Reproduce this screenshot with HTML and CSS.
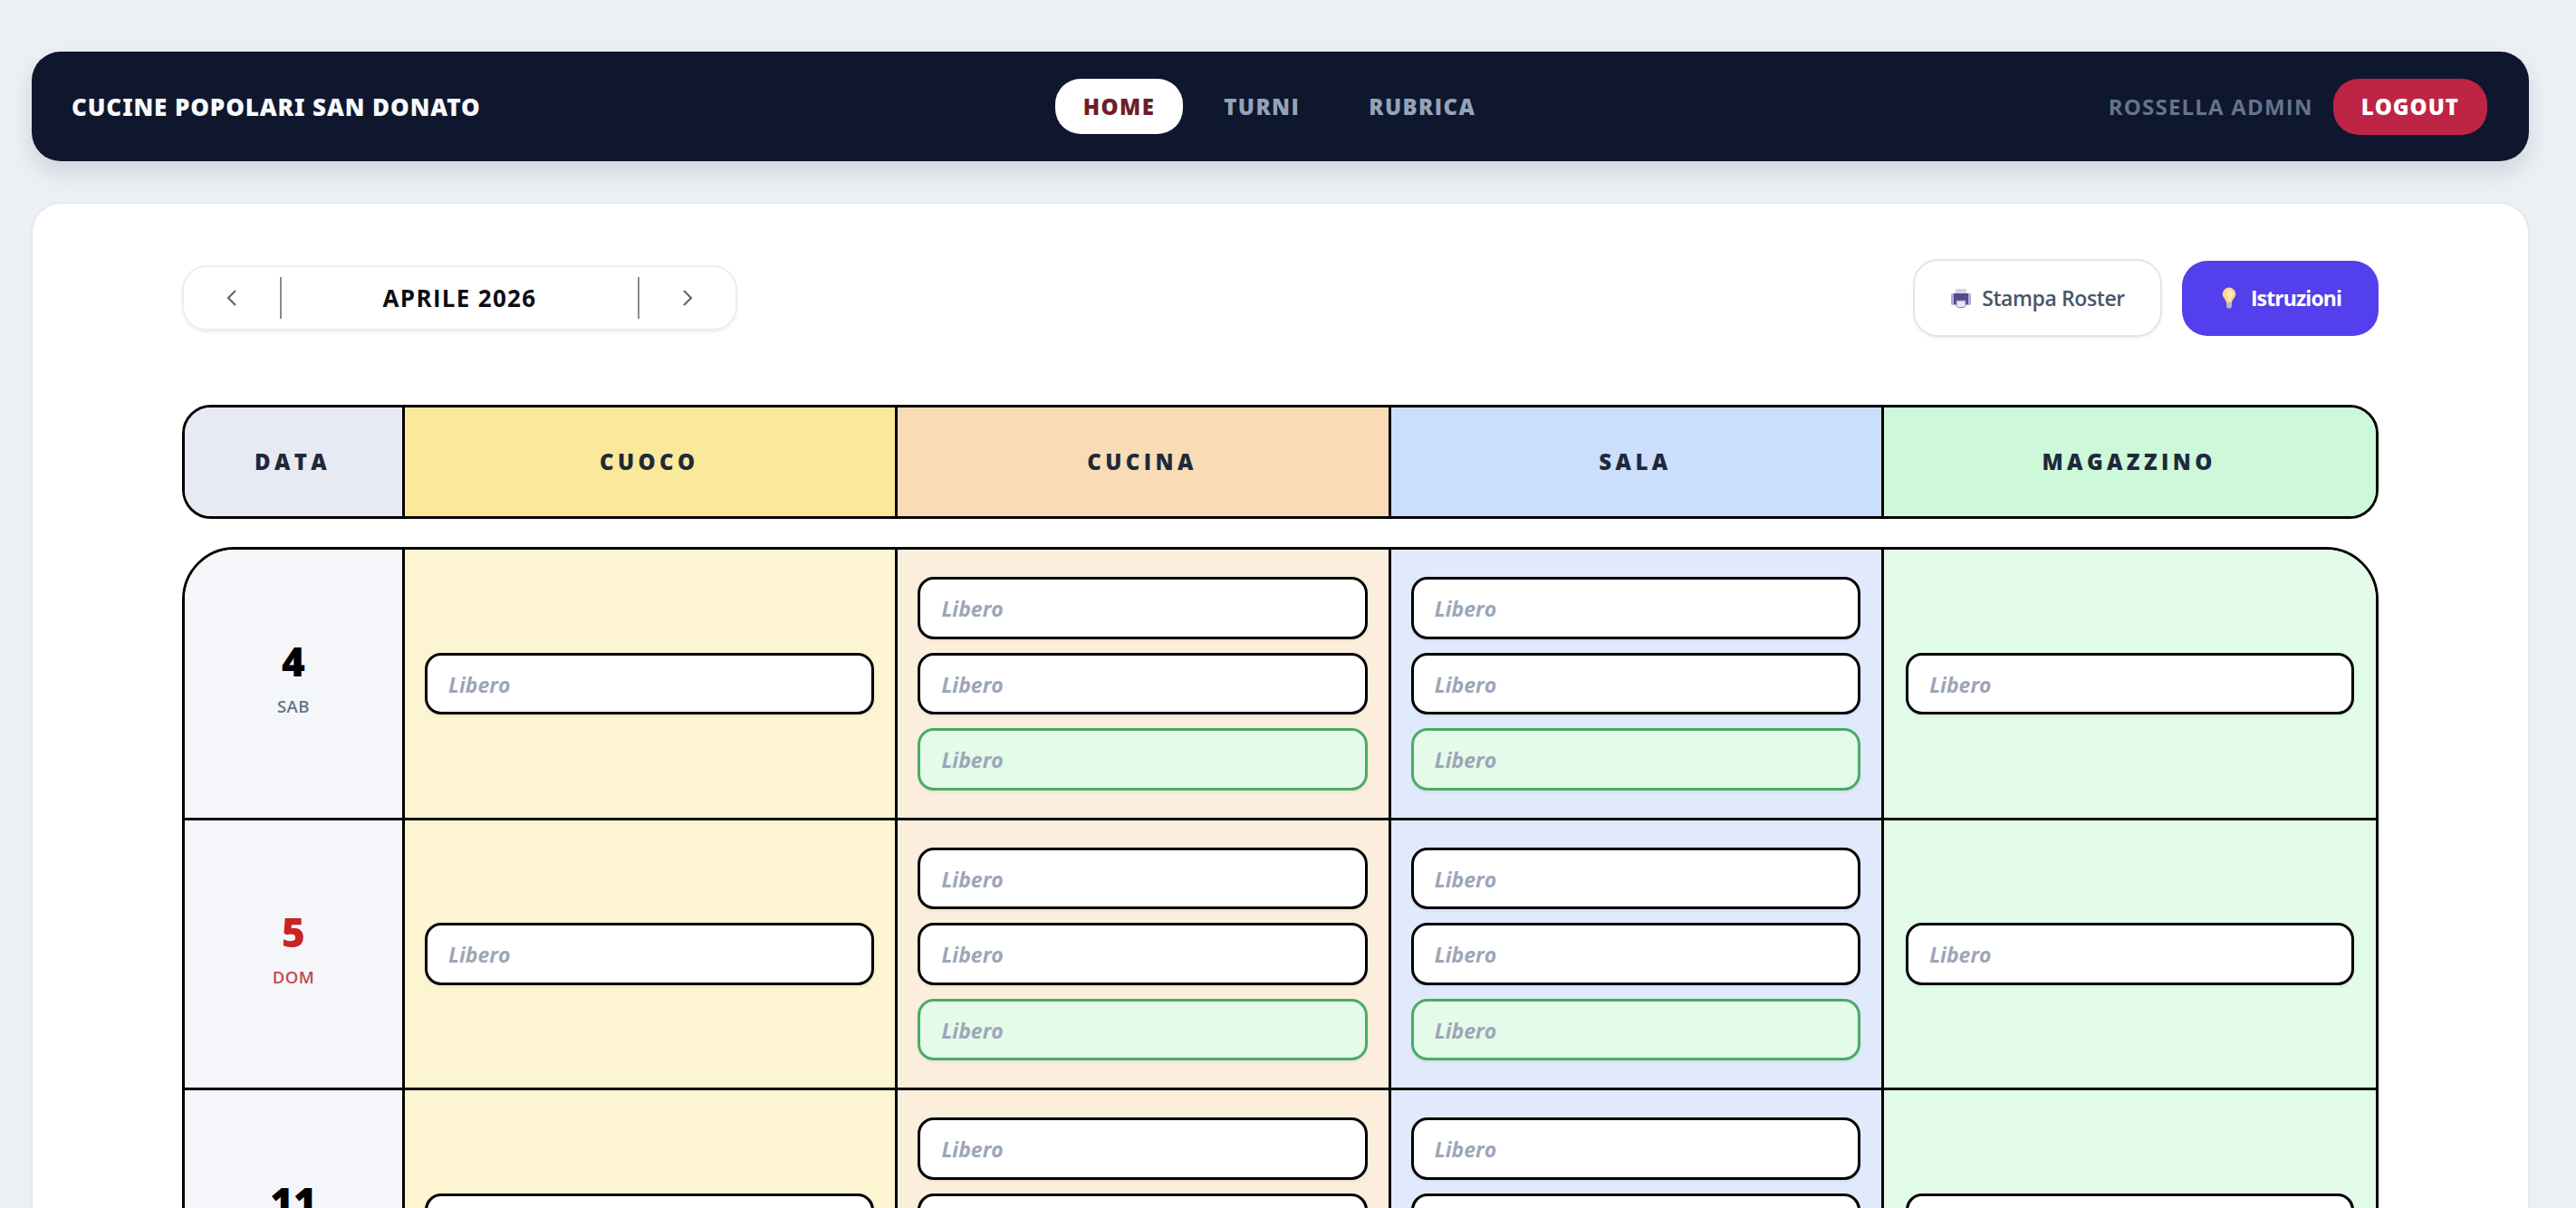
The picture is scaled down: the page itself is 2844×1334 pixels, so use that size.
FILE: index.html
```html
<!DOCTYPE html>
<html lang="it">
<head>
    <meta charset="UTF-8">
    <meta name="viewport" content="width=device-width, initial-scale=1.0">
    <title>Cucine Popolari San Donato</title>
    <link rel="stylesheet" href="styles.css">
</head>

<body>
    <header class="navbar">
        <div class="brand"><span>CUCINE POPOLARI SAN DONATO</span></div>
        <nav class="menu">
            <a class="active">HOME</a>
            <a>TURNI</a>
            <a>RUBRICA</a>
        </nav>
        <div class="user">
            <span class="user-name">ROSSELLA ADMIN</span>
            <button class="logout">LOGOUT</button>
        </div>
    </header>

    <main class="panel">
        <div class="toolbar">
            <div class="month">
                <button class="arrow" id="prevMonth">
                    <svg width="14" height="20" viewBox="0 0 14 20"><path d="M11 2 3 10l8 8"/></svg>
                </button>
                <span class="month-name">APRILE 2026</span>
                <button class="arrow" id="nextMonth">
                    <svg width="14" height="20" viewBox="0 0 14 20"><path d="m3 2 8 8-8 8"/></svg>
                </button>
            </div>
            <div class="actions">
                <button class="btn print">
                    <svg width="24" height="24" viewBox="0 0 24 24">
                        <path d="M6 2h12v7H6z" fill="#d5d0ea"/>
                        <rect x="1" y="7" width="22" height="13" rx="2" fill="#b3abd3"/>
                        <path d="M4 7h16v12H4z" fill="#544a8c"/>
                        <path d="M7 15h10v6l-1.500 1.500h-7L7 21z" fill="#e9e6f5" stroke="#8c86b0"/>
                    </svg>
                    <span>Stampa Roster</span>
                </button>
                <button class="btn help">
                    <svg width="18" height="24" viewBox="0 0 18 24">
                        <path d="M9 .5A7.300 7.300 0 0 0 1.700 7.800c0 4 3.600 5.200 4.300 9.200h6c.7-4 4.300-5.200 4.300-9.200A7.300 7.300 0 0 0 9 .5z" fill="#f8d88c"/>
                        <path d="M9 3c3 0 4.500 2 4.500 4.500S11 11 10.500 15h-2c0-4-2-5-2-8z" fill="#fdebb8"/>
                        <path d="M6 17h6v4.500L10.500 23.500h-3L6 21.500z" fill="#c3b4bd"/>
                    </svg>
                    <span>Istruzioni</span>
                </button>
            </div>
        </div>

        <div class="row head">
            <div class="data">DATA</div>
            <div class="cuoco">CUOCO</div>
            <div class="cucina">CUCINA</div>
            <div class="sala">SALA</div>
            <div class="magazzino">MAGAZZINO</div>
        </div>

        <div class="roster" id="roster"></div>
    </main>

    <script src="script.js"></script>
</body>
</html>
```
FILE: script.js
```js
document.addEventListener("DOMContentLoaded", () => {
    const roster = document.getElementById("roster");

    const days = [
        { num: 4, name: "SAB" },
        { num: 5, name: "DOM", holiday: true },
        { num: 11, name: "SAB" }
    ];

    // slots per role, "extra" is the additional green one
    const roles = {
        cuoco: ["base"],
        cucina: ["base", "base", "extra"],
        sala: ["base", "base", "extra"],
        magazzino: ["base"]
    };

    /** Build the cell of a role with its slots */
    function roleCell(role) {
        const slots = roles[role].map(type => `<div class="slot ${type}">Libero</div>`).join("");
        return `<div class="cell ${role}">${slots}</div>`;
    }

    roster.innerHTML = days.map(day => `
        <div class="row day">
            <div class="date ${day.holiday ? "holiday" : ""}">
                <strong>${day.num}</strong>
                <small>${day.name}</small>
            </div>
            ${Object.keys(roles).map(roleCell).join("")}
        </div>`).join("");
});
```
FILE: styles.css
```css
* { box-sizing: border-box; }
body {
    margin: 0;
    height: 1334px;
    padding: 57px 52px 0 35px;
    overflow: hidden;
    background: #eceff4;
    font-family: 'Open Sans', 'Noto Sans', sans-serif;
}
button {
    border: none;
    background: none;
    font: inherit;
    padding: 0;
    cursor: pointer;
}
.navbar {
    display: grid;
    grid-template-columns: 1fr auto 1fr;
    align-items: center;
    height: 121px;
    padding: 0 46px 0 44px;
    border-radius: 32px;
    background: #0f172f;
    box-shadow: 0 12px 24px rgba(15, 23, 47, 0.12);
}
.brand {
    color: #f8fafc;
    font-family: 'Noto Sans', 'Open Sans', sans-serif;
    font-size: 26px;
    font-weight: 900;
    letter-spacing: 0.9px;
}
.menu {
    display: flex;
    gap: 14px;
}
.menu a {
    height: 61px;
    line-height: 62px;
    padding: 0 31px;
    border-radius: 28px;
    color: #94a3b8;
    font-size: 24px;
    font-weight: 800;
    letter-spacing: 1.4px;
}
.menu .active { background: #fff; color: #6f1d28; }
.user {
    display: flex;
    justify-content: flex-end;
    align-items: center;
    gap: 22px;
}
.user-name {
    color: #64748b;
    font-size: 24px;
    font-weight: 700;
    letter-spacing: 1.2px;
}
.logout {
    height: 62px;
    padding: 0 31px;
    border-radius: 28px;
    background: #be2444;
    color: #fff;
    font-size: 24px;
    font-weight: 800;
    letter-spacing: 1px;
}
.panel {
    height: 1109px;
    margin: 47px 1px 0;
    padding: 61px 165px 0;
    border-radius: 32px 32px 0 0;
    background: #fff;
    box-shadow: 0 0 4px rgba(15, 23, 42, 0.08);
    overflow: hidden;
}
.toolbar {
    display: flex;
    justify-content: space-between;
    align-items: center;
    height: 86px;
    margin-bottom: 75px;
}
.month {
    display: flex;
    align-items: center;
    width: 613px;
    height: 72px;
    border: 2px solid #ededee;
    border-radius: 27px;
    box-shadow: 0 2px 3px rgba(0, 0, 0, 0.07);
}
.arrow {
    display: flex;
    align-items: center;
    justify-content: center;
    width: 108px;
    height: 46px;
}
.arrow path { fill: none; stroke: #666; stroke-width: 2.2; }
.arrow:first-child { border-right: 2px solid #8a8a8a; }
.arrow:last-child { border-left: 2px solid #8a8a8a; }
.month-name {
    flex: 1;
    text-align: center;
    color: #0b0d12;
    font-size: 26px;
    font-weight: 700;
    letter-spacing: 1.3px;
}
.actions { display: flex; align-items: center; gap: 22px; }
.btn {
    display: flex;
    align-items: center;
    justify-content: center;
    border-radius: 28px;
    font-size: 23px;
    font-weight: 600;
}
.print {
    gap: 11px;
    width: 275px;
    height: 86px;
    border: 2px solid #e2e4e8;
    color: #475569;
    letter-spacing: -0.4px;
    box-shadow: 0 2px 3px rgba(0, 0, 0, 0.06);
}
.help {
    gap: 15px;
    width: 217px;
    height: 83px;
    padding-left: 2px;
    background: #543fec;
    color: #fff;
    font-weight: 700;
    letter-spacing: -0.9px;
}
.row {
    display: grid;
    grid-template-columns: 243px repeat(3, 544.400px) 1fr;
}
.row > div { border-right: 3px solid #000; }
.row > div:last-child { border-right: none; }
.head {
    height: 126px;
    border: 3px solid #000;
    border-radius: 32px;
    overflow: hidden;
    margin-bottom: 31px;
}
.head div {
    display: flex;
    align-items: center;
    justify-content: center;
    padding: 0 2px 2px 0;
    color: #1e293b;
    font-size: 24px;
    font-weight: 800;
    letter-spacing: 4.4px;
}
.head .data { background: #e7eaf2; }
.head .cuoco { background: #fbe99b; }
.head .cucina { background: #f9dcb5; }
.head .sala { background: #cbdefc; }
.head .magazzino { background: #cdf8d9; }
.roster {
    border: 3px solid #000;
    border-radius: 58px;
    overflow: hidden;
}
.day { height: 298.700px; border-bottom: 3px solid #000; }
.date {
    display: flex;
    flex-direction: column;
    align-items: center;
    justify-content: center;
    padding-bottom: 14px;
    background: #f4f6fa;
    color: #000;
}
.date strong { font-size: 44px; font-weight: 800; line-height: 54px; }
.date small {
    margin-top: 10px;
    color: #64748b;
    font-size: 18.500px;
    font-weight: 600;
    line-height: 26px;
    letter-spacing: 0.5px;
}
.holiday strong { color: #c92323; }
.holiday small { color: #c24a50; }
.cell {
    display: flex;
    flex-direction: column;
    justify-content: center;
    gap: 15px;
    padding: 0 23px 0 22px;
}
.cell.cuoco { background: #fdf4d1; }
.cell.cucina { background: #fceedd; }
.cell.sala { background: #e0eafc; }
.cell.magazzino { background: #e3fbe9; padding: 0 24px; }
.slot {
    height: 68.500px;
    padding-left: 23px;
    border: 3px solid #000;
    border-radius: 18px;
    background: #fff;
    color: #9ca6b8;
    font-size: 23px;
    font-weight: 700;
    font-style: italic;
    line-height: 64px;
    box-shadow: 0 2px 3px rgba(0, 0, 0, 0.06);
}
.extra { border-color: #4aab66; background: #e3fbe8; }
```
